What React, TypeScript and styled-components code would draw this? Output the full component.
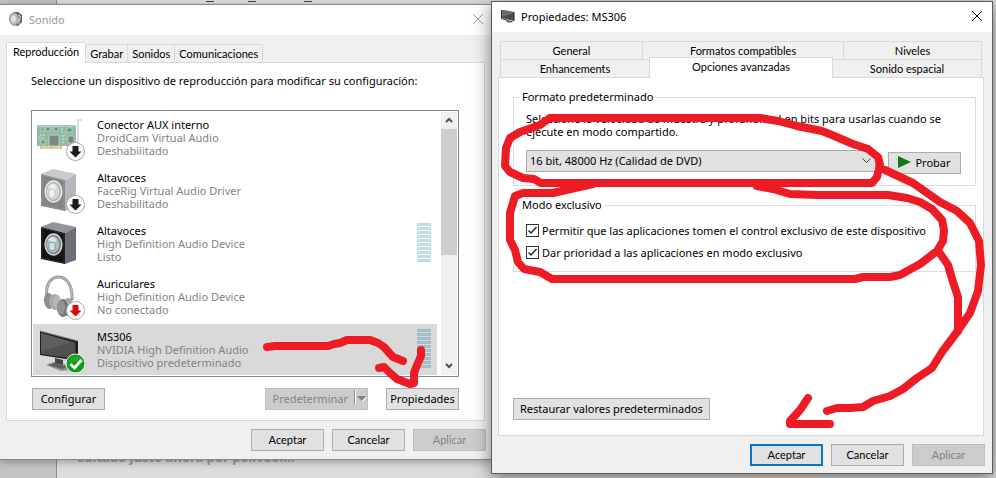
import React from "react";
import styled, { createGlobalStyle, css } from "styled-components";

const GlobalStyle = createGlobalStyle`
  *, *::before, *::after { box-sizing: border-box; }
  body {
    margin: 0;
    background: #dcdcdc;
    color: #000;
    font: 11px/13px "Noto Sans", "Open Sans", sans-serif;
  }
  button, select, input { font: inherit; color: inherit; margin: 0; }
  ul, p { margin: 0; padding: 0; }
`;

const compactText = css`
  font-family: Lato, "Noto Sans", sans-serif;
  font-size: 11px;
`;

const Desktop = styled.div`
  position: relative;
  display: grid;
  min-height: 100vh;
  overflow: hidden;
`;

const Backdrop = styled.div`
  grid-area: 1 / 1;
  display: grid;
  grid-template-columns: 57px 1fr;
`;

const BackdropRail = styled.div`
  background: #c3c3c3;
  border-right: 1px solid #8c8c8c;
`;

const BackdropPage = styled.div`
  display: flex;
  flex-direction: column;
  justify-content: space-between;
  padding: 0 0 11px 20px;
  background: #dcdcdc;
  color: #929ba6;
  font-size: 13px;
  line-height: 20px;
  font-weight: 700;
`;

const TopMarks = styled.svg`
  display: block;
  width: 300px;
  height: 4px;
`;

const Windows = styled.div`
  grid-area: 1 / 1;
  display: grid;
  grid-template-columns: 491fr 502fr;
  align-items: start;
  padding-right: 3px;
`;

const Window = styled.section<{ $active?: boolean }>`
  position: relative;
  display: flex;
  flex-direction: column;
  background: #f0f0f0;
  border: 1px solid ${(p) => (p.$active ? "#5c5c5c" : "#8a8a8a")};
  ${(p) =>
    p.$active
      ? css`
          margin-top: 1px;
          box-shadow: 0 4px 16px rgba(0, 0, 0, 0.5);
        `
      : css`
          margin-top: 4px;
          border-width: 1px 0;
          box-shadow: 0 2px 8px rgba(0, 0, 0, 0.3);
        `}
`;

const TitleBar = styled.header<{ $active?: boolean }>`
  display: flex;
  align-items: center;
  gap: 6px;
  height: 30px;
  padding: ${(p) => (p.$active ? "0 10px 2px 9px" : "0 8px 2px 9px")};
  background: #fff;
  color: ${(p) => (p.$active ? "#000" : "#999")};
`;

const Title = styled.h1`
  flex: 1;
  margin: 0;
  font-size: 11px;
  font-weight: 400;
`;

const CloseButton = styled.button`
  display: flex;
  padding: 0;
  border: 0;
  background: none;
  color: inherit;
`;

const Content = styled.div<{ $active?: boolean }>`
  display: flex;
  flex-direction: column;
  padding: ${(p) => (p.$active ? "9px 7px 7px 6px" : "7px 5px 8px 6px")};
`;

const TabStrip = styled.div`
  display: flex;
  align-items: flex-end;
`;

const tabBase = css`
  ${compactText}
  border: 1px solid #d9d9d9;
  background: #f0f0f0;
  padding: 0 4px;
  white-space: nowrap;
`;

const Tab = styled.button<{ $selected?: boolean }>`
  ${tabBase}
  height: 18px;
  border-width: 1px 1px 0 0;
  ${(p) =>
    p.$selected &&
    css`
      position: relative;
      height: 21px;
      margin-bottom: -1px;
      padding: 0 6px 3px;
      border-width: 1px 1px 0 1px;
      background: #fff;
    `}
`;

const TabRow = styled.div<{ $columns: string }>`
  display: grid;
  grid-template-columns: ${(p) => p.$columns};
  align-items: end;
  padding: 0 4px 0 2px;
`;

const WideTab = styled.button<{ $selected?: boolean }>`
  ${tabBase}
  height: 18px;
  margin-right: -1px;
  border-bottom: 0;
  ${(p) =>
    p.$selected &&
    css`
      position: relative;
      height: 21px;
      margin-top: -2px;
      margin-bottom: -1px;
      padding-bottom: 3px;
      background: #fff;
    `}
`;

const Panel = styled.div<{ $active?: boolean }>`
  display: flex;
  flex-direction: column;
  min-height: 359px;
  margin-right: 1px;
  border: 1px solid #d9d9d9;
  background: #fff;
  padding: ${(p) => (p.$active ? "12px 7px 15px 14px" : "11px 25px 10px 24px")};
`;

const DeviceBox = styled.div`
  display: grid;
  grid-template-columns: 1fr 16px;
  gap: 4px;
  margin-top: 23px;
  padding: 1px;
  border: 1px solid #828790;
`;

const DeviceList = styled.ul`
  list-style: none;
`;

const Device = styled.li<{ $selected?: boolean }>`
  display: grid;
  grid-template-columns: 48px 1fr 14px;
  column-gap: 12px;
  align-items: start;
  height: 53px;
  padding: 3px 6px 0 4px;
  background: ${(p) => (p.$selected ? "#d9d9d9" : "#fff")};
  &:last-child { height: 51px; }
`;

const DeviceText = styled.div`
  display: flex;
  flex-direction: column;
  padding-top: 3px;
  color: #838383;
`;

const DeviceName = styled.strong`
  color: #000;
  font-weight: 400;
`;

const Meter = styled.div<{ $selected?: boolean }>`
  height: 39px;
  margin-top: 2px;
  background: repeating-linear-gradient(
    ${(p) => (p.$selected ? "#a5bdc5" : "#c2dde4")} 0 3px,
    transparent 3px 4px
  );
`;

const Scrollbar = styled.div`
  display: grid;
  grid-template-rows: 17px 126px 1fr 17px;
  background: #f0f0f0;
`;

const ScrollButton = styled.button`
  display: grid;
  place-items: center;
  padding: 0;
  border: 0;
  background: none;
`;

const ScrollThumb = styled.div`
  background: #cdcdcd;
`;

const ButtonRow = styled.div`
  display: flex;
  gap: 18px;
  padding: 11px 0 0 1px;
`;

const Spacer = styled.span`
  flex: 1;
`;

const Button = styled.button<{ $primary?: boolean }>`
  display: inline-flex;
  align-items: center;
  justify-content: center;
  gap: 4px;
  min-width: 73px;
  height: 22px;
  padding: 0 3px 2px;
  border: 1px solid #adadad;
  background: #e1e1e1;
  white-space: nowrap;
  ${(p) => p.$primary && "border: 2px solid #0078d7;"}
  &:disabled {
    border-color: #bfbfbf;
    background: #ccc;
    color: #838383;
  }
`;

const FooterButton = styled(Button)`
  ${compactText}
`;

const RestoreButton = styled(Button)`
  align-self: flex-start;
  margin-top: auto;
  padding: 0 6px 1px;
`;

const SplitButton = styled(Button)`
  justify-content: space-between;
  gap: 5px;
  padding: 0 0 2px 6px;
`;

const TestButton = styled(Button)`
  margin-top: 2px;
`;

const Footer = styled.footer`
  display: flex;
  justify-content: flex-end;
  gap: 8px;
  padding-top: 8px;
`;

const Group = styled.fieldset`
  min-width: 0;
  margin: 0 0 12px;
  padding: 8px 14px 11px 12px;
  border: 1px solid #dcdcdc;
`;

const CheckGroup = styled(Group)`
  padding: 7px 14px 8px 12px;
`;

const Legend = styled.legend`
  margin-left: -6px;
  padding: 0 2px;
  line-height: 14px;
`;

const FormatRow = styled.div`
  display: grid;
  grid-template-columns: 1fr 73px;
  gap: 12px;
  align-items: start;
  margin-top: 12px;
`;

const SelectWrap = styled.div`
  display: grid;
  align-items: center;
  & > * { grid-area: 1 / 1; }
  & > svg { justify-self: end; margin-right: 5px; pointer-events: none; }
`;

const Select = styled.select`
  appearance: none;
  width: 100%;
  height: 22px;
  padding: 0 20px 1px 3px;
  border: 1px solid #adadad;
  border-radius: 0;
  background: #e1e1e1;
`;

const CheckRow = styled.label`
  display: flex;
  align-items: center;
  gap: 3px;
  height: 22px;
`;

const CheckBox = styled.span`
  display: grid;
  & > * { grid-area: 1 / 1; }
  & > svg { pointer-events: none; }
`;

const CheckInput = styled.input`
  appearance: none;
  width: 13px;
  height: 13px;
  border: 1px solid #333;
  background: #fff;
  & + svg { visibility: hidden; }
  &:checked + svg { visibility: visible; }
`;

const Ink = styled.svg`
  position: absolute;
  inset: 0;
  width: 100%;
  height: 478px;
  pointer-events: none;
`;

const CloseIcon = () => (
  <svg width="10" height="10" viewBox="0 0 10 10" stroke="currentColor" fill="none">
    <path d="M0 0L10 10M10 0L0 10" />
  </svg>
);

const SpeakerTitleIcon = () => (
  <svg width="14" height="14" viewBox="0 0 14 14">
    <path d="M5 0h4l4 3v7l-4 4-4-1z" fill="#555" />
    <path d="M9 1l3 3-1 8-3 1z" fill="#8b8b8b" />
    <ellipse cx="5" cy="7" rx="4.5" ry="6.3" fill="#b5bbbe" stroke="#8d9396" />
    <ellipse cx="4.5" cy="7" rx="2.3" ry="3.5" fill="#dce5e9" />
    <path d="M10 3l2 2M9 8l3-2M9 11l2-3" stroke="#ddd" />
  </svg>
);

const TvTitleIcon = () => (
  <svg width="14" height="14" viewBox="0 0 14 14">
    <path d="M1 1l12 2v9L1 9z" fill="#4c4c4c" />
    <path d="M1 1l12 2v1L1 8z" fill="#6e6e6e" />
    <path d="M.5 1v8.500l11 3.500" stroke="#333" fill="none" />
    <path d="M13 3v9" stroke="#222" />
    <path d="M4 11l7 2.500H7z" fill="#555" />
  </svg>
);

const DownBadge = ({ color }: { color: string }) => (
  <g>
    <circle cx="38.5" cy="36.5" r="9" fill="#fff" stroke="#a5a5a5" />
    <path d="M35.5 31h6v5.5h3l-6 6-6-6h3z" fill={color} />
  </g>
);

const CardIcon = () => (
  <svg width="48" height="48" viewBox="0 0 48 48">
    <path d="M41 36V5h4" fill="none" stroke="#d3d3d3" strokeWidth="1.6" />
    <path d="M0 10h39v21H0z" fill="#8dbca2" />
    <path d="M0 10h39v2H0z" fill="#a9cdb8" />
    <path d="M3 31h22v3H3z" fill="#e5bd8c" />
    <path d="M6 31v3M9 31v3M12 31v3M16 31v3M19 31v3M22 31v3" stroke="#f6e6cf" />
    <path d="M12 20h10v11H12z" fill="#7b8582" stroke="#bad4c5" />
    <path d="M31 21h6v7h-6z" fill="#78827e" stroke="#b6cbbf" />
    <path d="M4 13h3v3H4zM9 12h4v4H9zM17 12h4v4h-4zM30 13h5v4h-5zM4 25h4v4H4z" fill="#70877c" stroke="#c7ddcf" strokeWidth=".8" />
    <path d="M3 20h5M24 14h3M24 17h4M25 21h3M25 24h4M2 23h6M25 27h3" stroke="#d9ebe0" strokeDasharray="2 1" />
    <path d="M27 19h2v2h-2z" fill="#d6b978" />
    <DownBadge color="#1b1b1b" />
  </svg>
);

const SpeakerIcon = ({ dim }: { dim?: boolean }) => (
  <svg width="48" height="48" viewBox="0 0 48 48">
    <path d="M4 6L16 1l23 5-11 6z" fill={dim ? "#c9cacc" : "#92949a"} />
    <path d="M28 12l11-6v33l-11 4z" fill={dim ? "#b5b6ba" : "#6c6f78"} />
    <path d="M4 6l24 6v31L4 38z" fill={dim ? "#858585" : "#131313"} />
    <path d="M5 7l22 6v29L5 37z" fill="none" stroke={dim ? "#9b9b9b" : "#3a3a3a"} strokeWidth=".7" />
    <ellipse cx="16.5" cy="23.5" rx="8.4" ry="10.5" fill={dim ? "#b3b6b8" : "#7d8488"} stroke={dim ? "#e9eaea" : "#d9dcde"} strokeWidth="1.4" />
    <ellipse cx="16" cy="23.5" rx="6.2" ry="8.3" fill={dim ? "#d3d9dc" : "#aebbc2"} />
    <path d="M11 19q4-6 9 0l-3 3z" fill={dim ? "#eef0f1" : "#dbe5ea"} />
    <ellipse cx="15" cy="25.5" rx="3.2" ry="4.2" fill={dim ? "#edf2f3" : "#d4e1e8"} stroke={dim ? "#b5bec2" : "#798992"} strokeWidth=".8" />
    {dim && <DownBadge color="#1b1b1b" />}
  </svg>
);

const HeadphonesIcon = () => (
  <svg width="48" height="48" viewBox="0 0 48 48">
    <path d="M10 23C8 10 14 3 22 3s14 9 13 23" fill="none" stroke="#8f8f8f" strokeWidth="3" />
    <path d="M10 22C8 11 14 3 22 3s14 9 13 21" fill="none" stroke="#c5c5c5" strokeWidth="1.2" />
    <ellipse cx="12" cy="27" rx="5" ry="8" fill="#8d8d8d" transform="rotate(-8 12 27)" />
    <ellipse cx="18" cy="28" rx="6" ry="8" fill="#a9a9a9" transform="rotate(-8 18 28)" />
    <ellipse cx="20" cy="28" rx="4" ry="7" fill="#b5b5b5" />
    <ellipse cx="31" cy="33" rx="6" ry="9" fill="#a4a4a4" />
    <ellipse cx="26" cy="34" rx="6" ry="9" fill="#777" />
    <ellipse cx="24" cy="34" rx="4" ry="7" fill="#929292" />
    <path d="M29 26q5 5 3 15" stroke="#c6c6c6" fill="none" />
    <DownBadge color="#dc0a0a" />
  </svg>
);

const TvIcon = () => (
  <svg width="48" height="48" viewBox="0 0 48 48">
    <path d="M9 38l8-3 18 4-3 4-8 1z" fill="#8b8f92" />
    <path d="M11 38l7-2 12 4-5 2z" fill="#596065" />
    <path d="M18 31l8 2v5l-8-2z" fill="#414548" />
    <path d="M3 4l38 10v20L3 28z" fill="#202020" />
    <path d="M4 6l35 10v16L4 27z" fill="#505050" />
    <path d="M4 6l31 9L4 24z" fill="#666" opacity=".65" />
    <path d="M3 4l38 10" stroke="#858585" />
    <path d="M39 15v18" stroke="#111" />
    <circle cx="38.5" cy="36.5" r="9.5" fill="#119b14" stroke="#f1f5f1" />
    <path d="M30.5 37a8 8 0 0 1 16 0q-8-5-16 0z" fill="#37af35" opacity=".5" />
    <path d="M33.5 37l4 4 7-8" fill="none" stroke="#fff" strokeWidth="2.8" />
  </svg>
);

const Chevron = ({ up }: { up?: boolean }) => (
  <svg width="8" height="7" viewBox="0 0 8 7" fill="none" stroke="#505050" strokeWidth="2">
    <path d={up ? "M1 5l3-3 3 3" : "M1 1l3 3 3-3"} />
  </svg>
);

const devices = [
  { name: "Conector AUX interno", driver: "DroidCam Virtual Audio", state: "Deshabilitado", icon: <CardIcon /> },
  { name: "Altavoces", driver: "FaceRig Virtual Audio Driver", state: "Deshabilitado", icon: <SpeakerIcon dim /> },
  { name: "Altavoces", driver: "High Definition Audio Device", state: "Listo", icon: <SpeakerIcon />, meter: true },
  { name: "Auriculares", driver: "High Definition Audio Device", state: "No conectado", icon: <HeadphonesIcon /> },
  { name: "MS306", driver: "NVIDIA High Definition Audio", state: "Dispositivo predeterminado", icon: <TvIcon />, meter: true, selected: true },
];

const strokes = [
  "M267 347L275 346H328L334 344L340 343L347 340H370L378 343L384 347L393 357L403 361",
  "M379 368L384 367L390 373L397 379L410 384L414 383V373L417 365L421 356V350",
  "M550 118H760L778 121L797 126L822 131L832 135L853 144L868 149L878 157L880 165L877 177L872 183H541L534 179L523 178L510 172L505 166L506 148L510 138L520 132L540 125L550 118",
  "M757 186L773 189L790 194L817 195H888L907 198L920 202L932 209L942 220L944 230L943 241L937 251L920 264L900 275L890 277H863L855 279H552L540 272L524 269L518 262L515 250L510 240V213L515 196L523 193H553L575 188L593 184",
  "M885 170L913 183L940 202L957 211L970 223L974 231L979 241L981 265L978 291L970 313L957 332L942 352L932 368L917 378L903 389L890 396L873 401L863 407L850 408H837L827 411",
  "M939 252L948 265L953 282L958 297V331",
  "M808 398L800 410L790 421V424H830",
];

function CheckOption({ children }: { children: React.ReactNode }) {
  return (
    <CheckRow>
      <CheckBox>
        <CheckInput type="checkbox" defaultChecked />
        <svg width="13" height="13" viewBox="0 0 13 13" fill="none" stroke="#222" strokeWidth="1.4">
          <path d="M2.5 6.5L5 9l5.5-6" />
        </svg>
      </CheckBox>
      {children}
    </CheckRow>
  );
}

function SoundWindow() {
  return (
    <Window aria-label="Sonido">
      <TitleBar>
        <SpeakerTitleIcon />
        <Title>Sonido</Title>
        <CloseButton aria-label="Cerrar"><CloseIcon /></CloseButton>
      </TitleBar>
      <Content>
        <TabStrip role="tablist">
          <Tab role="tab" aria-selected $selected>Reproducción</Tab>
          <Tab role="tab">Grabar</Tab>
          <Tab role="tab">Sonidos</Tab>
          <Tab role="tab">Comunicaciones</Tab>
        </TabStrip>
        <Panel>
          <p>Seleccione un dispositivo de reproducción para modificar su configuración:</p>
          <DeviceBox>
            <DeviceList>
              {devices.map((d, i) => (
                <Device key={i} $selected={d.selected}>
                  {d.icon}
                  <DeviceText>
                    <DeviceName>{d.name}</DeviceName>
                    <span>{d.driver}</span>
                    <span>{d.state}</span>
                  </DeviceText>
                  {d.meter && <Meter $selected={d.selected} />}
                </Device>
              ))}
            </DeviceList>
            <Scrollbar>
              <ScrollButton aria-label="Subir"><Chevron up /></ScrollButton>
              <ScrollThumb />
              <span />
              <ScrollButton aria-label="Bajar"><Chevron /></ScrollButton>
            </Scrollbar>
          </DeviceBox>
          <ButtonRow>
            <Button>Configurar</Button>
            <Spacer />
            <SplitButton disabled>
              Predeterminar
              <svg width="14" height="16" viewBox="0 0 14 16">
                <path d="M1.5 0v15" stroke="#8f8f8f" />
                <path d="M2.5 0v15" stroke="#fff" />
                <path d="M9 12l4.500-5" stroke="#fff" fill="none" />
                <path d="M4 6h9L8.500 11z" fill="#838383" />
              </svg>
            </SplitButton>
            <Button>Propiedades</Button>
          </ButtonRow>
        </Panel>
        <Footer>
          <FooterButton>Aceptar</FooterButton>
          <FooterButton>Cancelar</FooterButton>
          <FooterButton disabled>Aplicar</FooterButton>
        </Footer>
      </Content>
    </Window>
  );
}

function PropertiesWindow() {
  return (
    <Window $active aria-label="Propiedades: MS306">
      <TitleBar $active>
        <TvTitleIcon />
        <Title>Propiedades: MS306</Title>
        <CloseButton aria-label="Cerrar"><CloseIcon /></CloseButton>
      </TitleBar>
      <Content $active>
        <div role="tablist">
          <TabRow $columns="139fr 197fr 135fr">
            <WideTab role="tab">General</WideTab>
            <WideTab role="tab">Formatos compatibles</WideTab>
            <WideTab role="tab">Niveles</WideTab>
          </TabRow>
          <TabRow $columns="149fr 183fr 149fr">
            <WideTab role="tab">Enhancements</WideTab>
            <WideTab role="tab" aria-selected $selected>Opciones avanzadas</WideTab>
            <WideTab role="tab">Sonido espacial</WideTab>
          </TabRow>
        </div>
        <Panel $active>
          <Group>
            <Legend>Formato predeterminado</Legend>
            <p>Seleccione la velocidad de muestra y profundidad en bits para usarlas cuando se ejecute en modo compartido.</p>
            <FormatRow>
              <SelectWrap>
                <Select aria-label="Formato predeterminado">
                  <option>16 bit, 48000 Hz (Calidad de DVD)</option>
                </Select>
                <svg width="9" height="6" viewBox="0 0 9 6" fill="none" stroke="#444">
                  <path d="M.5 .5l4 4 4-4" />
                </svg>
              </SelectWrap>
              <TestButton>
                <svg width="13" height="12" viewBox="0 0 13 12">
                  <path d="M0 0l13 6-13 6z" fill="#117a17" />
                </svg>
                Probar
              </TestButton>
            </FormatRow>
          </Group>
          <CheckGroup>
            <Legend>Modo exclusivo</Legend>
            <CheckOption>Permitir que las aplicaciones tomen el control exclusivo de este dispositivo</CheckOption>
            <CheckOption>Dar prioridad a las aplicaciones en modo exclusivo</CheckOption>
          </CheckGroup>
          <RestoreButton>Restaurar valores predeterminados</RestoreButton>
        </Panel>
        <Footer>
          <FooterButton $primary>Aceptar</FooterButton>
          <FooterButton>Cancelar</FooterButton>
          <FooterButton disabled>Aplicar</FooterButton>
        </Footer>
      </Content>
    </Window>
  );
}

export default function App() {
  return (
    <>
      <GlobalStyle />
      <Desktop>
        <Backdrop>
          <BackdropRail />
          <BackdropPage>
            <TopMarks viewBox="0 0 300 4">
              <path d="M129 1.500h8M171 1.500h8M227 1.500h8" stroke="#444" />
            </TopMarks>
            <span>Editado justo ahora por poliveol...</span>
          </BackdropPage>
        </Backdrop>
        <Windows>
          <SoundWindow />
          <PropertiesWindow />
        </Windows>
        <Ink
          viewBox="0 0 996 478"
          preserveAspectRatio="none"
          fill="none"
          stroke="#ed1c24"
          strokeWidth="8"
          strokeLinecap="round"
          strokeLinejoin="round"
        >
          {strokes.map((d) => (
            <path key={d} d={d} />
          ))}
        </Ink>
      </Desktop>
    </>
  );
}
